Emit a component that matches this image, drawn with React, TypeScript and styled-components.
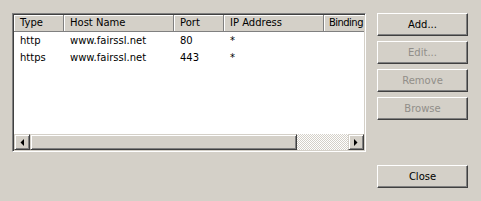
import React from "react";
import styled, { createGlobalStyle } from "styled-components";

const Global = createGlobalStyle`
  html, body { margin: 0; padding: 0; background: #d4d0c8; }
  body { width: 481px; height: 201px; overflow: hidden; font-family: "DejaVu Sans", Verdana, sans-serif; font-size: 10px; color: #000; }
`;

const Dialog = styled.div`
  display: grid;
  grid-template-columns: 354px 91px;
  grid-template-rows: 139px auto;
  column-gap: 11px;
  row-gap: 13px;
  padding: 13px 13px 0 12px;
`;

const ListBox = styled.div`
  box-sizing: border-box;
  width: 354px;
  height: 139px;
  border: 1px solid;
  border-color: #808080 #fff #fff #808080;
  box-shadow: inset 1px 1px #404040, inset -1px -1px #d4d0c8;
  padding: 1px;
  display: flex;
  flex-direction: column;
  overflow: hidden;
`;

const ListInner = styled.div`
  flex: 1;
  background: #fff;
  display: flex;
  flex-direction: column;
  overflow: hidden;
`;

const cols = "50px 110px 50px 100px 60px";

const HeaderRow = styled.div`
  display: grid;
  grid-template-columns: ${cols};
  height: 17px;
  flex: none;
`;

const HeaderCell = styled.div<{ $tight?: boolean }>`
  box-sizing: border-box;
  background: #d4d0c8;
  border-right: 1px solid #808080;
  border-bottom: 1px solid #808080;
  box-shadow: inset 1px 1px #fff;
  padding-left: ${(p) => (p.$tight ? "5px" : "6px")};
  letter-spacing: ${(p) => (p.$tight ? "-0.55px" : "0")};
  line-height: 16px;
  white-space: nowrap;
  overflow: hidden;
`;

const Body = styled.div`
  flex: 1;
`;

const Row = styled.div`
  display: grid;
  grid-template-columns: ${cols};
  height: 17px;
  line-height: 17px;
`;

const Cell = styled.div`
  padding-left: 6px;
  white-space: nowrap;
`;

const ScrollBar = styled.div`
  display: flex;
  height: 16px;
  flex: none;
`;

const Raised = styled.div`
  box-sizing: border-box;
  background: #d4d0c8;
  border: 1px solid;
  border-color: #d4d0c8 #404040 #404040 #d4d0c8;
  box-shadow: inset 1px 1px #fff, inset -1px -1px #808080;
`;

const ArrowButton = styled(Raised)`
  width: 16px;
  height: 16px;
  display: flex;
  align-items: center;
  justify-content: center;
`;

const Thumb = styled(Raised)`
  width: 267px;
  height: 16px;
`;

const Track = styled.div`
  flex: 1;
  background-color: #fff;
  background-image: conic-gradient(#d4d0c8 25%, #fff 0 50%, #d4d0c8 0 75%, #fff 0);
  background-size: 2px 2px;
`;

const ButtonColumn = styled.div`
  display: flex;
  flex-direction: column;
  gap: 5px;
`;

const Button = styled.button<{ $disabled?: boolean }>`
  box-sizing: border-box;
  width: 91px;
  height: 23px;
  margin: 0;
  padding: 0;
  background: #d4d0c8;
  border: 1px solid;
  border-color: #fff #404040 #404040 #fff;
  box-shadow: inset -1px -1px #808080;
  font-family: "DejaVu Sans", Verdana, sans-serif;
  font-size: 10px;
  color: ${(p) => (p.$disabled ? "#918e89" : "#000")};
  text-align: center;
`;

const Arrow = ({ dir }: { dir: "left" | "right" }) => (
  <svg width="4" height="7" viewBox="0 0 4 7">
    {dir === "left" ? (
      <polygon points="4,0 4,7 0.5,3.5" fill="#000" />
    ) : (
      <polygon points="0,0 0,7 3.5,3.5" fill="#000" />
    )}
  </svg>
);

const headers = ["Type", "Host Name", "Port", "IP Address", "Binding"];
const rows = [
  ["http", "www.fairssl.net", "80", "*", ""],
  ["https", "www.fairssl.net", "443", "*", ""],
];

export default function App() {
  return (
    <>
      <Global />
      <Dialog>
        <ListBox>
          <ListInner>
            <HeaderRow>
              {headers.map((h, i) => (
                <HeaderCell key={h} $tight={i === headers.length - 1}>
                  {h}
                </HeaderCell>
              ))}
            </HeaderRow>
            <Body>
              {rows.map((r, i) => (
                <Row key={i}>
                  {r.map((c, j) => (
                    <Cell key={j}>{c}</Cell>
                  ))}
                </Row>
              ))}
            </Body>
            <ScrollBar>
              <ArrowButton>
                <Arrow dir="left" />
              </ArrowButton>
              <Thumb />
              <Track />
              <ArrowButton>
                <Arrow dir="right" />
              </ArrowButton>
            </ScrollBar>
          </ListInner>
        </ListBox>
        <ButtonColumn>
          <Button>Add...</Button>
          <Button $disabled>Edit...</Button>
          <Button $disabled>Remove</Button>
          <Button $disabled>Browse</Button>
        </ButtonColumn>
        <div />
        <Button>Close</Button>
      </Dialog>
    </>
  );
}
